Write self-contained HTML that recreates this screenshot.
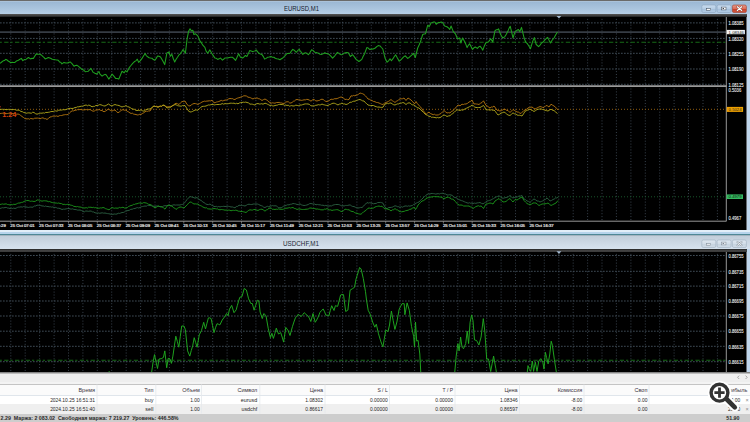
<!DOCTYPE html>
<html><head><meta charset="utf-8"><style>
html,body{margin:0;padding:0;width:750px;height:422px;overflow:hidden;background:#d0dbe6;font-family:"Liberation Sans",sans-serif}
.a{position:absolute;box-sizing:border-box}
svg{display:block}
</style></head><body>
<div class="a" style="left:0;top:0;width:750px;height:1px;background:#6a6a6a"></div>
<div class="a" style="left:0;top:1px;width:750px;height:13.4px;background:linear-gradient(#b4c9de 0px,#9cb8d4 1.2px,#b4cde5 12.4px,#c2d6ea 13.4px)"></div>
<div class="a" style="left:284px;top:5px;font-size:7px;line-height:7px;color:#15202c;white-space:nowrap;transform:scaleX(0.85);transform-origin:0 0">EURUSD,M1</div>
<svg class="a" style="left:700px;top:4px" width="50" height="10" viewBox="700 4 50 10"><defs><linearGradient id="bga" x1="0" y1="0" x2="0" y2="1"><stop offset="0" stop-color="#c9dcef"/><stop offset="0.5" stop-color="#b6cde4"/><stop offset="0.52" stop-color="#a4bfda"/><stop offset="1" stop-color="#b4cce4"/></linearGradient><linearGradient id="cga" x1="0" y1="0" x2="0" y2="1"><stop offset="0" stop-color="#ec9a88"/><stop offset="0.5" stop-color="#dc6a55"/><stop offset="0.52" stop-color="#c8402a"/><stop offset="1" stop-color="#d45a40"/></linearGradient></defs><rect x="701.8" y="5" width="14" height="7.5" rx="1.5" fill="url(#bga)" stroke="#8aa3be" stroke-width="0.6"/><rect x="717.1" y="5" width="14" height="7.5" rx="1.5" fill="url(#bga)" stroke="#8aa3be" stroke-width="0.6"/><rect x="732.4" y="5" width="14" height="7.5" rx="1.5" fill="url(#cga)" stroke="#9a4030" stroke-width="0.6"/><rect x="706.3" y="8.7" width="4.4" height="1.5" fill="#fff" stroke="#3a4450" stroke-width="0.5"/><rect x="721.6" y="7.1" width="4.4" height="2.8" fill="#fff" stroke="#3a4450" stroke-width="0.5"/><rect x="722.6" y="8.0" width="1.4" height="1.0" fill="#3a4450"/><path d="M737.3 6.7 L741.7 10.5 M741.7 6.7 L737.3 10.5" stroke="#6a2a20" stroke-width="1.9" stroke-linecap="round"/><path d="M737.3 6.7 L741.7 10.5 M741.7 6.7 L737.3 10.5" stroke="#fff" stroke-width="1.2" stroke-linecap="round"/></svg>
<svg width="750" height="215" viewBox="0 16 750 215" style="position:absolute;left:0;top:16px;font-family:'Liberation Sans',sans-serif">
<rect x="0" y="16" width="746.5" height="214.4" fill="#000"/>
<g stroke="#3e4a56" stroke-width="0.9" stroke-dasharray="1 1.9"><line x1="10.8" y1="16" x2="10.8" y2="221"/><line x1="25.2" y1="16" x2="25.2" y2="221"/><line x1="39.6" y1="16" x2="39.6" y2="221"/><line x1="54.1" y1="16" x2="54.1" y2="221"/><line x1="68.5" y1="16" x2="68.5" y2="221"/><line x1="82.9" y1="16" x2="82.9" y2="221"/><line x1="97.3" y1="16" x2="97.3" y2="221"/><line x1="111.7" y1="16" x2="111.7" y2="221"/><line x1="126.2" y1="16" x2="126.2" y2="221"/><line x1="140.6" y1="16" x2="140.6" y2="221"/><line x1="155.0" y1="16" x2="155.0" y2="221"/><line x1="169.4" y1="16" x2="169.4" y2="221"/><line x1="183.8" y1="16" x2="183.8" y2="221"/><line x1="198.3" y1="16" x2="198.3" y2="221"/><line x1="212.7" y1="16" x2="212.7" y2="221"/><line x1="227.1" y1="16" x2="227.1" y2="221"/><line x1="241.5" y1="16" x2="241.5" y2="221"/><line x1="255.9" y1="16" x2="255.9" y2="221"/><line x1="270.4" y1="16" x2="270.4" y2="221"/><line x1="284.8" y1="16" x2="284.8" y2="221"/><line x1="299.2" y1="16" x2="299.2" y2="221"/><line x1="313.6" y1="16" x2="313.6" y2="221"/><line x1="328.0" y1="16" x2="328.0" y2="221"/><line x1="342.5" y1="16" x2="342.5" y2="221"/><line x1="356.9" y1="16" x2="356.9" y2="221"/><line x1="371.3" y1="16" x2="371.3" y2="221"/><line x1="385.7" y1="16" x2="385.7" y2="221"/><line x1="400.1" y1="16" x2="400.1" y2="221"/><line x1="414.6" y1="16" x2="414.6" y2="221"/><line x1="429.0" y1="16" x2="429.0" y2="221"/><line x1="443.4" y1="16" x2="443.4" y2="221"/><line x1="457.8" y1="16" x2="457.8" y2="221"/><line x1="472.2" y1="16" x2="472.2" y2="221"/><line x1="486.7" y1="16" x2="486.7" y2="221"/><line x1="501.1" y1="16" x2="501.1" y2="221"/><line x1="515.5" y1="16" x2="515.5" y2="221"/><line x1="529.9" y1="16" x2="529.9" y2="221"/><line x1="544.3" y1="16" x2="544.3" y2="221"/><line x1="558.8" y1="16" x2="558.8" y2="221"/><line x1="573.2" y1="16" x2="573.2" y2="221"/><line x1="587.6" y1="16" x2="587.6" y2="221"/><line x1="602.0" y1="16" x2="602.0" y2="221"/><line x1="616.4" y1="16" x2="616.4" y2="221"/><line x1="630.9" y1="16" x2="630.9" y2="221"/><line x1="645.3" y1="16" x2="645.3" y2="221"/><line x1="659.7" y1="16" x2="659.7" y2="221"/><line x1="674.1" y1="16" x2="674.1" y2="221"/><line x1="688.5" y1="16" x2="688.5" y2="221"/><line x1="703.0" y1="16" x2="703.0" y2="221"/><line x1="717.4" y1="16" x2="717.4" y2="221"/></g>
<g stroke="#45525e" stroke-width="0.9" stroke-dasharray="1.7 1.3"><line x1="0" y1="22.9" x2="726" y2="22.9"/><line x1="0" y1="38.4" x2="726" y2="38.4"/><line x1="0" y1="53.3" x2="726" y2="53.3"/><line x1="0" y1="69.0" x2="726" y2="69.0"/><line x1="0" y1="84.3" x2="726" y2="84.3"/></g>
<line x1="0" y1="32.15" x2="726" y2="32.15" stroke="#363c44" stroke-width="1.7"/>
<line x1="0" y1="42.2" x2="726" y2="42.2" stroke="#176a17" stroke-width="1.1" stroke-dasharray="4.3 1.9 2.2 2.4" stroke-dashoffset="6.6"/>
<line x1="0" y1="86.2" x2="726.5" y2="86.2" stroke="#9a9a9a" stroke-width="1.8"/>
<line x1="0" y1="109.3" x2="726" y2="109.3" stroke="#a06810" stroke-width="0.9" stroke-dasharray="1 2"/>
<line x1="0" y1="196.8" x2="726" y2="196.8" stroke="#1a6030" stroke-width="0.9" stroke-dasharray="1 2"/>
<rect x="0" y="106.3" width="1" height="1" fill="#a03020"/>
<polyline fill="none" stroke="#1fa01f" stroke-width="1.05" stroke-opacity="1" stroke-linejoin="round" points="0.0,63.4 1.43,62.24 2.85,61.09 4.28,60.54 5.7,59.4 6.95,59.84 8.2,61.08 9.45,61.75 10.7,62.7 12.1,62.2 13.5,62.51 14.9,62.4 16.35,61.08 17.8,60.6 19.55,59.44 21.3,58.4 22.8,60.6 24.55,59.51 26.3,59.2 28.4,57.5 30.6,58.9 32.0,58.28 33.4,58.4 34.85,56.08 36.3,53.9 38.05,54.34 39.8,54.2 41.25,54.91 42.7,56.3 43.95,57.35 45.2,58.9 46.8,58.31 48.4,57.5 50.5,58.2 52.25,59.2 54.0,59.4 55.43,59.77 56.87,59.91 58.3,60.3 59.5,61.93 60.7,62.29 61.9,63.9 64.0,62.4 65.8,63.02 67.6,63.0 69.0,62.31 70.4,62.0 72.2,63.83 74.0,66.3 75.4,65.46 76.8,65.3 78.25,66.13 79.7,67.3 81.1,68.68 82.5,69.5 83.9,70.31 85.3,71.7 86.75,71.57 88.2,71.3 89.5,69.98 90.8,68.4 92.0,70.29 93.2,72.4 94.95,73.29 96.7,74.1 98.9,71.5 100.0,74.1 102.1,76.2 103.3,75.21 104.5,74.6 105.7,74.4 107.25,76.49 108.8,79.1 110.45,76.76 112.1,74.1 113.85,76.18 115.6,78.4 117.2,78.58 118.8,79.1 120.4,75.28 122.0,71.3 124.2,72.7 125.6,70.5 127.0,72.0 129.2,67.7 130.95,65.51 132.7,63.4 134.23,61.82 135.77,60.86 137.3,59.2 138.7,62.4 140.35,60.58 142.0,58.4 143.6,55.72 145.2,53.5 146.2,55.6 147.65,56.72 149.1,57.7 150.5,57.97 151.9,58.2 153.35,59.59 154.8,60.3 156.2,58.36 157.6,56.0 159.05,56.31 160.5,57.0 162.6,60.6 164.7,64.6 166.9,53.0 169.0,52.0 170.4,56.3 171.8,54.2 173.25,58.53 174.7,62.0 176.1,59.29 177.5,57.19 178.9,54.9 180.0,54.1 181.55,51.98 183.1,49.4 185.4,53.3 187.1,38.8 188.5,31.6 190.0,28.8 191.4,30.9 192.8,30.2 193.9,34.5 195.6,33.8 197.8,35.9 199.9,40.9 201.35,42.74 202.8,45.2 204.9,47.3 206.0,50.9 207.7,53.3 209.9,49.9 212.0,53.7 213.45,55.84 214.9,58.0 216.3,58.29 217.7,59.4 219.1,58.85 220.5,58.0 222.4,60.1 223.6,59.29 224.8,58.0 226.23,57.9 227.67,58.0 229.1,57.5 230.85,57.23 232.6,57.3 234.0,58.7 235.5,60.4 237.05,57.23 238.6,53.7 240.5,57.3 242.6,58.0 244.0,56.83 245.4,55.5 246.9,56.5 248.3,53.62 249.7,50.6 251.1,51.06 252.5,51.6 253.7,51.34 254.9,50.87 256.1,49.9 257.5,51.58 258.9,53.3 260.35,54.0 261.8,54.4 263.2,56.35 264.6,59.1 266.05,58.38 267.5,57.3 269.25,57.03 271.0,56.5 272.45,57.34 273.9,57.3 275.3,58.29 276.7,58.7 278.35,59.06 280.0,59.8 281.4,58.8 282.8,58.0 284.6,56.2 286.4,54.1 287.6,53.4 288.8,53.53 290.0,53.3 291.4,51.05 292.8,49.4 294.6,50.51 296.4,52.3 297.8,50.45 299.2,49.4 300.4,51.31 301.6,52.4 302.8,54.4 304.2,53.32 305.6,52.7 307.0,53.6 308.4,54.7 310.0,52.53 311.6,49.7 313.25,50.62 314.9,52.3 316.3,52.6 317.7,53.0 318.9,53.51 320.1,54.28 321.3,54.4 323.05,53.84 324.8,52.7 326.23,53.59 327.67,53.63 329.1,54.4 330.85,56.22 332.6,58.2 334.8,55.8 336.2,53.92 337.6,52.3 339.4,53.85 341.2,54.7 342.6,54.41 344.0,53.3 345.43,52.79 346.87,52.61 348.3,52.7 350.4,56.5 352.5,54.7 353.7,56.03 354.9,57.59 356.1,59.4 357.5,60.44 358.9,61.5 360.35,60.53 361.8,59.4 363.2,56.34 364.6,53.7 366.8,47.6 368.2,48.05 369.6,49.4 371.4,49.13 373.2,49.0 375.3,48.0 376.75,46.68 378.2,45.6 380.0,45.9 381.4,47.51 382.8,49.0 385.0,58.0 387.1,62.2 388.55,60.86 390.0,58.7 391.4,60.8 392.8,58.94 394.2,56.75 395.6,54.7 397.4,58.06 399.2,61.2 400.6,60.11 402.0,58.7 403.65,56.85 405.3,55.8 407.7,58.4 409.12,57.48 410.55,56.1 411.97,54.91 413.4,53.3 415.3,57.5 417.7,48.0 419.1,45.07 420.5,41.6 422.7,34.5 424.1,34.05 425.5,33.8 427.7,25.2 429.1,26.7 431.2,22.8 432.4,22.44 433.6,21.91 434.8,22.0 436.2,24.3 438.3,22.4 439.73,22.52 441.17,22.01 442.6,22.4 444.7,26.0 446.9,26.7 448.3,27.71 449.7,29.5 451.1,26.0 453.3,31.6 455.4,33.8 457.5,38.8 459.7,38.0 460.8,43.0 462.5,38.0 464.6,41.6 465.85,44.34 467.1,47.6 468.35,45.35 469.6,43.7 471.05,46.41 472.5,49.4 473.9,47.8 475.3,47.0 477.4,48.4 478.7,46.85 480.0,46.2 481.4,47.84 482.8,50.1 484.25,46.19 485.7,43.0 487.1,42.33 488.5,41.9 490.7,38.8 492.8,41.9 494.9,30.9 496.1,29.77 497.3,29.84 498.5,28.8 500.6,34.5 502.8,38.0 504.9,36.6 506.3,34.2 507.7,31.6 508.95,28.58 510.2,26.2 511.6,31.88 513.0,38.0 514.9,31.9 516.65,30.56 518.4,29.5 519.8,31.6 521.5,27.4 522.8,32.58 524.1,38.0 525.8,42.3 527.1,43.41 528.4,45.2 530.5,48.7 532.6,41.6 534.3,37.6 536.2,44.5 538.6,46.6 540.05,45.11 541.5,43.0 543.1,42.04 544.7,40.2 546.15,38.72 547.6,37.3 549.0,40.14 550.4,43.0 551.6,40.96 552.8,39.31 554.0,38.0 555.75,34.81 557.5,31.9"/>
<polyline fill="none" stroke="#b87810" stroke-width="0.9" stroke-opacity="1" stroke-linejoin="round" points="0.0,113.5 1.2,113.37 2.4,113.25 3.6,113.74 4.8,113.25 6.0,113.7 7.2,113.58 8.4,113.34 9.6,113.77 10.8,113.38 12.0,113.77 13.2,113.48 14.4,113.53 15.6,113.87 16.8,114.26 18.0,114.0 19.33,114.49 20.67,115.42 22.0,116.5 23.33,117.38 24.67,118.44 26.0,118.8 27.2,118.87 28.4,118.71 29.6,119.23 30.8,118.39 32.0,118.8 33.33,118.92 34.67,118.21 36.0,118.2 37.33,118.08 38.67,118.26 40.0,118.8 41.5,118.13 43.0,117.8 44.33,118.65 45.67,118.65 47.0,119.5 48.5,118.32 50.0,117.0 51.33,116.79 52.67,116.22 54.0,116.0 55.33,116.21 56.67,115.94 58.0,116.5 59.25,115.73 60.5,115.49 61.75,115.54 63.0,115.0 64.25,114.81 65.5,114.58 66.75,114.7 68.0,114.5 69.5,112.96 71.0,111.5 72.33,110.89 73.67,110.9 75.0,110.2 76.25,110.2 77.5,109.62 78.75,109.74 80.0,109.5 81.25,109.6 82.5,109.99 83.75,109.93 85.0,109.8 86.33,109.51 87.67,110.03 89.0,109.5 90.33,109.72 91.67,110.56 93.0,111.2 94.25,111.08 95.5,110.19 96.75,110.14 98.0,109.8 99.33,109.62 100.67,110.42 102.0,110.5 104.0,111.8 105.5,111.1 107.0,110.0 108.5,109.0 110.25,110.34 112.0,111.0 113.5,110.33 115.0,110.0 116.5,111.58 118.0,112.8 119.33,111.88 120.67,110.87 122.0,109.8 123.33,109.83 124.67,110.24 126.0,110.0 127.33,111.4 128.67,111.98 130.0,113.0 131.2,113.45 132.4,113.2 133.6,114.08 134.8,114.33 136.0,114.5 137.25,114.94 138.5,114.79 139.75,114.31 141.0,114.5 142.33,113.5 143.67,112.85 145.0,111.8 146.25,111.17 147.5,111.37 148.75,110.9 150.0,111.0 151.33,108.99 152.67,107.27 154.0,106.0 155.33,106.51 156.67,106.2 158.0,106.8 159.2,106.31 160.4,106.18 161.6,106.35 162.8,105.38 164.0,105.5 165.5,106.2 167.0,107.0 168.2,106.74 169.4,106.75 170.6,106.39 171.8,106.13 173.0,105.5 174.5,104.15 176.0,103.2 177.5,103.77 179.0,104.5 180.5,102.87 182.0,101.5 183.5,101.6 185.0,101.0 187.0,104.5 188.5,105.66 190.0,106.0 191.33,104.85 192.67,104.04 194.0,103.5 195.33,103.59 196.67,103.93 198.0,104.5 199.33,103.65 200.67,102.91 202.0,102.0 203.2,101.59 204.4,101.15 205.6,101.33 206.8,101.08 208.0,101.0 209.33,100.79 210.67,100.87 212.0,100.2 214.0,102.8 215.2,102.61 216.4,102.09 217.6,101.83 218.8,101.52 220.0,101.0 221.25,100.37 222.5,100.91 223.75,100.58 225.0,100.1 226.25,100.04 227.5,99.57 228.75,98.8 230.0,98.5 231.25,98.66 232.5,98.64 233.75,99.37 235.0,99.5 236.25,98.61 237.5,98.11 238.75,97.74 240.0,97.5 241.25,96.77 242.5,96.51 243.75,95.82 245.0,95.8 246.5,96.05 248.0,97.2 249.25,97.34 250.5,97.74 251.75,98.43 253.0,99.0 254.33,98.17 255.67,98.54 257.0,97.8 258.25,98.58 259.5,98.83 260.75,99.6 262.0,100.5 263.5,99.61 265.0,99.0 266.25,99.75 267.5,100.41 268.75,101.94 270.0,102.5 271.25,103.12 272.5,102.82 273.75,103.01 275.0,103.2 276.5,102.48 278.0,102.5 279.25,102.39 280.5,102.86 281.75,103.04 283.0,103.5 284.33,103.23 285.67,102.06 287.0,101.8 288.33,101.77 289.67,103.01 291.0,103.0 292.2,102.33 293.4,101.28 294.6,100.94 295.8,99.77 297.0,99.5 298.5,99.78 300.0,100.0 301.33,100.36 302.67,100.19 304.0,99.8 305.33,99.88 306.67,99.39 308.0,99.5 309.5,100.23 311.0,101.2 313.0,99.5 314.33,99.7 315.67,100.74 317.0,101.0 318.25,100.58 319.5,100.35 320.75,99.5 322.0,99.2 323.25,99.53 324.5,100.63 325.75,101.36 327.0,101.5 328.33,101.05 329.67,100.24 331.0,99.2 332.25,99.39 333.5,99.22 334.75,98.65 336.0,98.8 337.2,98.5 338.4,98.03 339.6,97.42 340.8,97.1 342.0,97.2 343.5,98.15 345.0,99.5 346.33,99.28 347.67,99.67 349.0,99.5 351.0,95.8 352.25,96.06 353.5,95.45 354.75,95.74 356.0,95.2 357.33,94.91 358.67,94.14 360.0,93.0 361.33,93.38 362.67,93.75 364.0,94.5 365.33,95.75 366.67,97.23 368.0,99.0 369.33,99.23 370.67,100.11 372.0,100.5 373.5,101.46 375.0,101.7 376.33,102.44 377.67,102.55 379.0,103.0 380.33,103.64 381.67,104.27 383.0,104.5 384.5,103.13 386.0,102.5 387.25,101.89 388.5,101.37 389.75,100.5 391.0,99.5 392.33,100.73 393.67,101.48 395.0,102.5 396.25,101.29 397.5,100.91 398.75,99.57 400.0,98.8 401.33,98.8 402.67,98.69 404.0,98.0 406.0,100.5 408.0,98.0 409.5,98.91 411.0,100.0 412.75,101.81 414.5,103.8 416.0,101.5 417.33,103.57 418.67,105.04 420.0,106.5 421.5,108.2 423.0,110.5 424.5,112.16 426.0,114.5 427.5,113.04 429.0,112.2 430.5,113.56 432.0,114.2 433.25,114.68 434.5,114.28 435.75,115.09 437.0,115.0 438.33,114.93 439.67,114.14 441.0,113.5 442.5,111.87 444.0,110.5 445.5,111.79 447.0,113.0 448.5,112.67 450.0,113.0 451.33,111.4 452.67,111.09 454.0,109.5 455.33,108.13 456.67,106.52 458.0,105.0 460.0,105.8 462.0,104.2 463.33,104.52 464.67,104.01 466.0,104.0 467.5,103.33 469.0,102.0 470.5,101.39 472.0,100.2 474.0,104.0 475.25,103.86 476.5,104.03 477.75,104.19 479.0,104.5 480.5,103.27 482.0,102.5 483.5,100.8 484.75,103.23 486.0,105.5 487.33,106.12 488.67,107.09 490.0,108.0 491.33,107.0 492.67,107.04 494.0,106.0 495.5,107.97 497.0,110.2 498.5,110.56 500.0,111.0 501.33,110.41 502.67,110.03 504.0,109.0 505.33,109.43 506.67,110.38 508.0,110.5 510.0,112.5 511.5,111.0 513.0,109.5 514.33,110.36 515.67,111.19 517.0,112.0 518.33,112.07 519.67,112.95 521.0,113.5 522.33,112.05 523.67,110.72 525.0,110.0 526.5,109.27 528.0,108.0 529.33,107.37 530.67,107.31 532.0,107.0 533.5,108.2 535.0,109.0 536.25,108.43 537.5,107.59 538.75,107.14 540.0,106.5 541.33,106.88 542.67,107.42 544.0,107.5 546.0,105.5 547.5,105.9 549.0,107.0 551.0,104.2 552.5,105.15 554.0,106.0 555.5,107.17 557.0,108.8 558,110"/>
<polyline fill="none" stroke="#b4ac1c" stroke-width="0.9" stroke-opacity="1" stroke-linejoin="round" points="0.0,109.5 1.2,109.37 2.4,109.25 3.6,109.74 4.8,109.25 6.0,109.7 7.2,109.58 8.4,109.34 9.6,109.77 10.8,109.38 12.0,109.77 13.2,109.48 14.4,109.53 15.6,109.87 16.8,110.26 18.0,110.0 19.5,110.41 21.0,111.5 22.33,111.68 23.67,112.48 25.0,112.8 26.25,113.25 27.5,112.97 28.75,112.86 30.0,113.0 31.33,113.26 32.67,112.26 34.0,112.5 35.5,113.67 37.0,114.2 38.25,113.76 39.5,113.38 40.75,113.11 42.0,113.2 43.25,112.85 44.5,113.13 45.75,112.39 47.0,112.5 48.25,112.32 49.5,112.13 50.75,111.64 52.0,111.5 53.25,111.47 54.5,110.96 55.75,110.88 57.0,111.2 58.5,110.34 60.0,110.0 61.25,110.11 62.5,109.83 63.75,109.68 65.0,109.8 66.33,109.44 67.67,108.89 69.0,108.5 70.5,108.32 72.0,108.5 73.5,108.26 75.0,107.5 76.25,107.43 77.5,106.77 78.75,106.82 80.0,106.5 81.25,106.2 82.5,106.19 83.75,105.73 85.0,105.2 86.25,105.08 87.5,105.78 88.75,105.08 90.0,105.5 92.0,106.8 93.25,106.4 94.5,106.38 95.75,105.51 97.0,105.5 98.33,105.26 99.67,104.62 101.0,104.8 102.33,105.35 103.67,105.84 105.0,106.0 106.75,105.07 108.5,104.0 110.25,105.34 112.0,106.0 113.5,105.08 115.0,104.5 116.33,105.01 117.67,105.25 119.0,105.5 120.5,106.32 122.0,107.0 123.33,106.46 124.67,106.31 126.0,105.5 127.5,106.65 129.0,107.0 130.33,107.71 131.67,108.61 133.0,109.2 134.33,109.24 135.67,110.25 137.0,110.5 138.33,110.4 139.67,110.48 141.0,109.8 142.5,110.79 144.0,111.2 145.5,110.01 147.0,109.2 148.5,109.0 150.0,109.0 151.33,108.15 152.67,106.57 154.0,106.0 155.33,106.47 156.67,106.7 158.0,107.5 159.2,106.66 160.4,106.1 161.6,106.24 162.8,105.17 164.0,105.0 165.5,106.27 167.0,108.0 168.33,107.57 169.67,107.67 171.0,107.0 172.33,105.79 173.67,105.29 175.0,104.5 176.25,104.92 177.5,105.6 178.75,105.91 180.0,106.0 181.25,106.2 182.5,105.55 183.75,105.55 185.0,105.5 186.5,107.87 188.0,110.5 190.0,112.0 191.33,111.85 192.67,111.41 194.0,110.5 195.33,110.09 196.67,110.01 198.0,110.2 199.33,108.73 200.67,107.49 202.0,106.5 203.33,106.32 204.67,106.25 206.0,106.0 207.2,105.49 208.4,104.95 209.6,105.03 210.8,104.68 212.0,104.5 213.2,104.56 214.4,104.91 215.6,104.67 216.8,104.51 218.0,104.5 219.4,104.43 220.8,104.3 222.2,103.56 223.6,104.14 225.0,103.6 226.25,103.75 227.5,103.74 228.75,103.57 230.0,103.2 231.33,103.2 232.67,103.31 234.0,103.14 235.33,103.72 236.67,103.31 238.0,103.8 239.33,102.98 240.67,102.67 242.0,102.5 243.25,102.2 244.5,102.36 245.75,102.1 247.0,102.5 248.5,102.9 250.0,104.2 251.25,104.09 252.5,104.24 253.75,104.68 255.0,105.0 256.5,103.82 258.0,103.5 259.25,104.01 260.5,103.95 261.75,103.71 263.0,104.2 265.0,103.2 266.25,103.55 267.5,104.21 268.75,104.8 270.0,105.5 271.25,105.16 272.5,105.81 273.75,105.94 275.0,105.5 276.2,105.27 277.4,105.09 278.6,104.53 279.8,104.34 281.0,104.5 282.2,104.56 283.4,104.69 284.6,105.4 285.8,105.0 287.0,105.5 288.2,105.17 289.4,106.11 290.6,105.83 291.8,105.58 293.0,106.0 294.4,105.84 295.8,105.17 297.2,105.43 298.6,105.63 300.0,105.0 301.33,105.06 302.67,104.64 304.0,104.2 305.33,103.92 306.67,103.95 308.0,104.0 309.33,104.37 310.67,105.58 312.0,106.0 313.25,105.83 314.5,105.85 315.75,105.25 317.0,105.2 318.25,104.65 319.5,104.88 320.75,104.74 322.0,104.0 323.2,104.62 324.4,104.88 325.6,105.19 326.8,105.42 328.0,105.5 329.25,104.68 330.5,104.37 331.75,103.65 333.0,103.2 334.25,103.23 335.5,103.68 336.75,104.35 338.0,105.0 339.33,104.12 340.67,103.84 342.0,103.0 343.33,103.91 344.67,103.95 346.0,104.5 347.33,104.13 348.67,103.41 350.0,102.2 351.25,102.36 352.5,101.58 353.75,101.2 355.0,101.2 356.25,100.53 357.5,100.08 358.75,99.66 360.0,99.5 361.33,100.11 362.67,100.86 364.0,101.0 365.33,102.64 366.67,103.65 368.0,105.0 369.33,105.3 370.67,105.6 372.0,105.5 373.5,105.53 375.0,106.3 376.33,106.68 377.67,107.14 379.0,107.0 380.33,107.32 381.67,107.36 383.0,107.2 385.0,104.0 386.2,103.78 387.4,103.31 388.6,103.66 389.8,103.05 391.0,103.0 392.33,103.94 393.67,104.76 395.0,105.0 396.25,104.41 397.5,103.91 398.75,103.9 400.0,103.0 401.33,103.14 402.67,102.57 404.0,102.8 406.0,104.5 407.5,103.31 409.0,102.8 410.2,103.09 411.4,104.36 412.6,104.88 413.8,104.88 415.0,105.8 416.33,106.83 417.67,107.7 419.0,108.0 420.5,109.64 422.0,111.0 423.5,112.37 425.0,114.0 426.33,114.88 427.67,115.33 429.0,116.5 430.2,116.26 431.4,117.32 432.6,117.23 433.8,117.32 435.0,117.5 436.25,117.89 437.5,117.44 438.75,117.83 440.0,117.5 441.33,116.96 442.67,115.57 444.0,115.0 445.5,115.53 447.0,116.5 448.5,115.91 450.0,115.7 451.33,114.4 452.67,113.64 454.0,112.5 455.5,110.93 457.0,109.8 458.5,110.08 460.0,110.5 461.33,109.83 462.67,110.2 464.0,109.5 465.33,108.7 466.67,108.13 468.0,107.5 469.33,106.74 470.67,106.2 472.0,105.0 473.33,105.76 474.67,107.04 476.0,107.5 477.33,107.5 478.67,107.53 480.0,107.5 481.75,106.52 483.5,105.5 484.75,107.22 486.0,109.8 487.33,109.88 488.67,109.78 490.0,110.2 491.33,109.69 492.67,110.34 494.0,110.0 495.33,111.37 496.67,113.31 498.0,115.0 499.5,114.3 501.0,113.2 502.5,112.65 504.0,112.0 505.33,112.84 506.67,114.02 508.0,115.0 510.0,115.5 511.5,114.2 513.0,112.8 514.33,113.79 515.67,113.91 517.0,115.0 518.25,115.3 519.5,115.27 520.75,115.55 522.0,116.0 523.5,113.9 525.0,111.3 526.25,110.73 527.5,110.21 528.75,109.81 530.0,109.0 531.33,110.2 532.67,110.62 534.0,111.5 535.5,110.6 537.0,109.5 538.33,109.27 539.67,109.04 541.0,108.8 542.33,109.44 543.67,109.69 545.0,110.2 546.5,110.63 548.0,111.0 549.5,110.08 551.0,109.2 552.5,110.25 554.0,110.5 555.75,112.18 557.5,113.5"/>
<polyline fill="none" stroke="#2a5e40" stroke-width="0.95" stroke-opacity="1" stroke-linejoin="round" points="0.0,208.5 1.25,208.09 2.5,207.69 3.75,207.89 5.0,207.5 6.25,207.37 7.5,208.03 8.75,208.13 10.0,208.5 11.25,208.1 12.5,208.51 13.75,208.08 15.0,208.5 16.2,208.1 17.4,207.43 18.6,207.11 19.8,207.07 21.0,206.8 22.25,207.14 23.5,206.56 24.75,206.7 26.0,207.0 27.2,207.15 28.4,207.48 29.6,207.19 30.8,207.07 32.0,207.2 33.25,207.13 34.5,205.79 35.75,206.02 37.0,205.2 38.25,205.21 39.5,205.28 40.75,205.46 42.0,206.0 43.2,205.93 44.4,206.48 45.6,206.01 46.8,206.47 48.0,206.5 49.2,206.83 50.4,206.79 51.6,207.14 52.8,206.91 54.0,207.5 55.2,207.3 56.4,207.64 57.6,208.26 58.8,208.23 60.0,208.5 62.0,209.5 63.4,209.13 64.8,209.18 66.2,208.86 67.6,208.52 69.0,208.5 70.2,208.96 71.4,209.08 72.6,208.87 73.8,209.37 75.0,209.5 76.25,209.65 77.5,210.09 78.75,210.08 80.0,210.0 81.5,210.56 83.0,211.5 84.4,211.83 85.8,210.96 87.2,211.13 88.6,211.33 90.0,211.0 91.25,211.14 92.5,211.89 93.75,211.94 95.0,212.8 96.2,212.99 97.4,213.12 98.6,212.99 99.8,213.3 101.0,213.0 102.33,212.83 103.67,213.18 105.0,213.0 106.25,213.33 107.5,213.57 108.75,213.71 110.0,214.0 111.4,214.31 112.8,214.4 114.2,213.98 115.6,214.15 117.0,214.0 118.25,213.23 119.5,213.43 120.75,213.01 122.0,212.5 123.2,212.54 124.4,211.99 125.6,211.11 126.8,210.8 128.0,210.5 129.4,210.25 130.8,209.27 132.2,209.27 133.6,208.6 135.0,208.5 136.25,207.91 137.5,207.6 138.75,207.99 140.0,207.5 141.25,206.79 142.5,206.52 143.75,206.28 145.0,206.0 146.25,206.21 147.5,205.37 148.75,205.58 150.0,205.5 151.25,205.68 152.5,206.12 153.75,206.2 155.0,206.38 156.25,205.99 157.5,206.25 158.75,206.34 160.0,206.6 161.25,206.81 162.5,206.74 163.75,205.87 165.0,205.76 166.25,205.67 167.5,205.54 168.75,205.62 170.0,205.5 171.33,205.5 172.67,205.12 174.0,204.8 175.33,205.09 176.67,204.97 178.0,205.0 180.0,205.0 181.33,204.56 182.67,204.41 184.0,203.5 185.5,201.67 187.0,199.5 188.5,198.01 190.0,196.5 191.5,196.96 193.0,197.2 195.0,198.2 197.0,197.5 198.5,198.91 200.0,200.0 201.33,200.43 202.67,202.03 204.0,202.5 205.5,203.75 207.0,204.5 208.5,204.59 210.0,204.0 211.33,205.1 212.67,205.57 214.0,206.5 215.2,206.51 216.4,206.34 217.6,206.92 218.8,206.51 220.0,207.0 221.25,206.49 222.5,206.49 223.75,206.32 225.0,206.5 226.2,206.46 227.4,206.3 228.6,206.35 229.8,206.59 231.0,207.0 232.33,206.91 233.67,207.41 235.0,207.8 236.33,206.51 237.67,206.4 239.0,205.2 240.2,205.46 241.4,205.2 242.6,205.46 243.8,205.7 245.0,206.0 246.33,205.28 247.67,204.46 249.0,204.2 250.4,204.47 251.8,204.56 253.2,204.05 254.6,204.03 256.0,204.0 257.33,204.03 258.67,204.44 260.0,205.2 261.25,205.63 262.5,206.14 263.75,207.22 265.0,207.5 266.25,206.82 267.5,206.32 268.75,206.78 270.0,206.0 271.25,205.98 272.5,205.58 273.75,205.89 275.0,205.8 276.25,205.87 277.5,206.83 278.75,207.73 280.0,207.8 281.25,207.63 282.5,206.98 283.75,206.09 285.0,205.8 286.33,205.3 287.67,204.73 289.0,204.89 290.33,204.3 291.67,204.13 293.0,203.5 294.33,203.68 295.67,203.92 297.0,204.5 298.5,204.43 300.0,203.8 301.33,204.8 302.67,205.25 304.0,205.5 305.4,205.38 306.8,204.99 308.2,204.52 309.6,203.65 311.0,203.5 312.25,203.84 313.5,204.02 314.75,204.05 316.0,204.8 317.4,204.46 318.8,204.76 320.2,204.82 321.6,205.29 323.0,205.2 324.4,205.73 325.8,205.39 327.2,205.95 328.6,206.12 330.0,205.8 331.4,205.95 332.8,205.16 334.2,204.77 335.6,204.51 337.0,204.5 338.2,204.49 339.4,204.75 340.6,205.39 341.8,205.9 343.0,205.8 344.2,205.95 345.4,205.46 346.6,205.46 347.8,205.43 349.0,205.0 350.25,205.0 351.5,205.89 352.75,206.49 354.0,206.5 355.33,207.25 356.67,207.73 358.0,208.0 359.33,207.81 360.67,207.38 362.0,207.5 363.25,206.51 364.5,204.85 365.75,204.02 367.0,202.5 368.25,203.1 369.5,202.76 370.75,202.94 372.0,203.2 373.5,203.75 375.0,203.5 376.33,203.37 377.67,202.54 379.0,202.5 380.33,202.4 381.67,202.65 383.0,203.2 384.5,206.21 386.0,208.5 387.33,208.44 388.67,207.51 390.0,207.5 391.25,207.37 392.5,207.08 393.75,206.37 395.0,205.8 396.25,206.09 397.5,206.69 398.75,206.74 400.0,207.5 401.25,206.69 402.5,207.17 403.75,206.51 405.0,206.0 406.2,205.98 407.4,206.31 408.6,205.82 409.8,206.17 411.0,205.8 412.33,205.49 413.67,204.34 415.0,204.0 416.33,203.11 417.67,202.48 419.0,202.0 420.33,200.43 421.67,199.41 423.0,198.0 424.33,196.62 425.67,195.59 427.0,194.5 428.33,193.83 429.67,194.2 431.0,193.5 432.2,193.43 433.4,193.58 434.6,193.76 435.8,194.1 437.0,193.8 438.2,193.61 439.4,193.94 440.6,193.44 441.8,193.35 443.0,193.2 444.33,193.82 445.67,193.97 447.0,195.0 448.33,194.95 449.67,194.71 451.0,195.0 452.33,195.39 453.67,196.94 455.0,197.5 456.25,197.83 457.5,198.73 458.75,199.58 460.0,200.0 461.4,200.61 462.8,200.96 464.2,201.7 465.6,202.29 467.0,202.8 468.2,203.2 469.4,202.73 470.6,203.27 471.8,203.13 473.0,203.5 474.4,203.1 475.8,203.35 477.2,202.91 478.6,202.76 480.0,202.5 481.5,203.38 483.0,203.8 484.33,203.24 485.67,201.88 487.0,201.0 488.33,200.77 489.67,200.34 491.0,200.0 492.33,199.18 493.67,198.51 495.0,197.5 496.33,196.89 497.67,196.4 499.0,195.8 500.5,196.88 502.0,198.0 503.33,198.23 504.67,197.85 506.0,197.5 507.33,197.17 508.67,196.56 510.0,195.5 511.25,196.53 512.5,198.0 514.25,197.55 516.0,197.0 517.5,196.9 519.0,196.0 520.5,196.06 522.0,195.5 524.0,199.0 525.5,199.67 527.0,201.0 528.5,201.41 530.0,202.5 531.33,201.28 532.67,199.78 534.0,199.0 535.5,199.77 537.0,201.0 538.5,201.12 540.0,202.0 541.33,201.49 542.67,200.92 544.0,200.0 545.5,199.36 547.0,198.0 548.5,199.19 550.0,201.0 551.5,200.44 553.0,199.5 554.25,199.02 555.5,197.93 556.75,197.97 558,197"/>
<polyline fill="none" stroke="#1c9a1c" stroke-width="0.9" stroke-opacity="1" stroke-linejoin="round" points="0.0,204.5 1.25,204.22 2.5,203.94 3.75,204.26 5.0,204.0 6.25,203.87 7.5,204.53 8.75,204.63 10.0,205.0 11.25,204.48 12.5,204.76 13.75,204.21 15.0,204.5 16.25,204.07 17.5,203.36 18.75,203.01 20.0,203.0 21.33,202.43 22.67,202.29 24.0,201.5 25.33,200.83 26.67,200.58 28.0,200.5 29.2,200.81 30.4,201.3 31.6,201.17 32.8,201.21 34.0,201.5 35.5,201.18 37.0,200.0 38.25,199.89 39.5,200.92 40.75,200.71 42.0,201.2 43.25,200.83 44.5,200.76 45.75,200.88 47.0,201.0 48.33,201.68 49.67,201.51 51.0,202.2 52.33,202.54 53.67,202.86 55.0,203.0 56.25,203.01 57.5,203.29 58.75,202.98 60.0,203.5 61.5,203.6 63.0,204.5 64.2,204.24 65.4,204.66 66.6,204.43 67.8,204.33 69.0,204.5 70.2,204.98 71.4,205.26 72.6,205.52 73.8,206.36 75.0,206.5 76.25,206.8 77.5,206.52 78.75,206.94 80.0,207.0 81.25,207.27 82.5,207.84 83.75,207.96 85.0,208.0 86.2,207.65 87.4,208.11 88.6,207.18 89.8,207.29 91.0,207.2 92.2,207.63 93.4,207.29 94.6,207.79 95.8,207.59 97.0,208.2 98.2,208.21 99.4,208.16 100.6,207.85 101.8,207.98 103.0,207.5 104.2,207.79 105.4,208.6 106.6,208.96 107.8,209.41 109.0,209.8 110.5,208.61 112.0,207.5 113.25,207.98 114.5,208.25 115.75,208.0 117.0,208.2 118.2,208.15 119.4,207.4 120.6,207.78 121.8,207.53 123.0,207.2 124.5,208.04 126.0,208.0 127.25,207.66 128.5,206.56 129.75,206.02 131.0,205.5 132.2,205.31 133.4,204.39 134.6,204.45 135.8,203.84 137.0,203.8 138.33,203.26 139.67,203.0 141.0,203.2 142.33,203.31 143.67,202.6 145.0,202.8 146.25,203.0 147.5,203.55 148.75,204.41 150.0,204.5 151.25,204.95 152.5,206.1 153.75,207.02 155.0,207.8 156.5,207.15 158.0,205.8 159.33,206.42 160.67,206.79 162.0,206.8 163.5,207.8 165.0,209.2 166.5,207.02 168.0,205.0 169.33,205.21 170.67,206.01 172.0,206.0 173.33,207.58 174.67,208.02 176.0,209.5 177.33,208.38 178.67,207.59 180.0,207.0 181.33,207.09 182.67,207.65 184.0,208.0 186.0,206.0 187.33,204.75 188.67,203.12 190.0,202.0 191.33,202.22 192.67,203.26 194.0,204.0 195.33,203.88 196.67,204.06 198.0,204.0 199.2,205.11 200.4,205.57 201.6,206.11 202.8,206.91 204.0,207.5 205.2,207.96 206.4,207.7 207.6,208.76 208.8,208.95 210.0,209.0 211.33,209.17 212.67,208.93 214.0,208.5 215.2,208.66 216.4,208.93 217.6,208.92 218.8,209.66 220.0,209.8 221.25,209.51 222.5,209.61 223.75,209.84 225.0,210.2 226.2,210.02 227.4,210.3 228.6,210.16 229.8,210.23 231.0,210.8 232.2,210.43 233.4,210.32 234.6,210.5 235.8,210.13 237.0,210.5 238.33,211.17 239.67,211.27 241.0,211.5 242.25,211.43 243.5,211.78 244.75,212.11 246.0,212.5 247.33,211.48 248.67,210.36 250.0,209.8 251.25,210.04 252.5,210.09 253.75,209.54 255.0,209.5 256.5,209.99 258.0,210.5 259.33,209.69 260.67,209.28 262.0,209.2 263.5,210.06 265.0,211.2 266.33,209.99 267.67,209.5 269.0,208.2 270.2,208.16 271.4,208.29 272.6,209.39 273.8,209.27 275.0,209.5 276.2,209.12 277.4,209.42 278.6,208.89 279.8,209.29 281.0,209.2 282.2,209.43 283.4,209.13 284.6,208.78 285.8,208.19 287.0,208.2 288.2,207.94 289.4,207.62 290.6,208.02 291.8,207.67 293.0,207.5 294.33,208.42 295.67,208.68 297.0,209.5 298.5,209.0 300.0,209.0 301.2,209.32 302.4,209.52 303.6,209.44 304.8,209.44 306.0,209.2 307.25,209.19 308.5,208.82 309.75,208.05 311.0,208.0 312.25,208.32 313.5,208.47 314.75,208.48 316.0,209.2 317.2,208.9 318.4,209.24 319.6,209.34 320.8,209.85 322.0,209.8 323.25,209.89 324.5,209.1 325.75,209.22 327.0,208.5 328.25,209.44 329.5,209.91 330.75,209.88 332.0,210.5 333.2,210.11 334.4,209.97 335.6,209.81 336.8,209.67 338.0,209.8 339.33,210.48 340.67,211.29 342.0,211.5 343.5,210.66 345.0,209.2 346.33,209.38 347.67,209.74 349.0,209.8 350.5,210.92 352.0,211.5 353.25,211.55 354.5,212.49 355.75,213.14 357.0,213.2 358.33,213.79 359.67,214.09 361.0,214.2 362.33,213.11 363.67,211.78 365.0,211.0 366.5,209.86 368.0,208.2 369.33,208.05 370.67,208.47 372.0,208.2 373.5,208.02 375.0,207.0 376.33,206.57 377.67,206.24 379.0,206.0 380.5,206.5 382.0,206.2 383.5,207.8 385.0,209.0 386.5,208.8 388.0,209.2 389.5,209.76 391.0,211.0 392.33,209.85 393.67,209.7 395.0,208.5 396.33,209.68 397.67,209.98 399.0,211.2 400.33,211.59 401.67,211.83 403.0,211.5 404.33,211.31 405.67,210.7 407.0,210.5 408.33,210.11 409.67,209.3 411.0,209.2 412.75,207.91 414.5,207.5 415.5,209.5 416.75,207.67 418.0,205.0 419.33,203.8 420.67,202.36 422.0,201.0 423.5,200.64 425.0,199.5 427.0,198.0 428.33,197.54 429.67,197.53 431.0,196.8 432.2,197.09 433.4,196.54 434.6,196.58 435.8,196.61 437.0,196.8 438.33,196.63 439.67,197.01 441.0,197.0 442.5,197.78 444.0,199.0 445.5,198.03 447.0,197.2 448.5,197.27 450.0,198.0 451.33,199.04 452.67,199.2 454.0,200.0 455.33,201.46 456.67,203.08 458.0,204.5 459.5,205.11 461.0,205.0 462.33,205.26 463.67,206.04 465.0,206.0 466.33,206.0 467.67,206.03 469.0,206.0 470.33,206.85 471.67,207.23 473.0,208.5 474.33,207.68 475.67,206.68 477.0,206.2 478.33,205.69 479.67,206.34 481.0,206.0 482.25,206.96 483.5,208.5 484.75,206.23 486.0,204.0 487.33,203.87 488.67,203.38 490.0,203.0 491.5,203.34 493.0,204.0 495.0,201.0 496.33,200.18 497.67,199.38 499.0,198.5 500.33,199.92 501.67,200.48 503.0,202.0 504.5,201.8 506.0,201.5 507.33,200.27 508.67,199.3 510.0,198.5 511.5,200.5 513.0,202.0 515.0,199.5 517.0,200.0 518.5,199.01 520.0,198.0 522.0,197.0 524.0,200.5 525.5,202.06 527.0,203.5 528.5,204.23 530.0,204.5 531.5,204.12 533.0,203.0 534.5,202.95 536.0,203.0 537.5,204.35 539.0,205.5 540.5,204.75 542.0,204.0 543.5,203.91 545.0,203.8 546.5,203.57 548.0,203.0 549.5,204.21 551.0,205.5 552.5,204.78 554.0,204.0 556.0,203.0 558,200.5"/>
<text x="2.2" y="116.8" font-size="7.3" font-weight="bold" fill="#d0400c">1.24</text>
<line x1="726.3" y1="16" x2="726.3" y2="221.3" stroke="#a8a8a8" stroke-width="0.9"/>
<line x1="0" y1="221.2" x2="726.3" y2="221.2" stroke="#a8a8a8" stroke-width="0.9"/>
<g stroke="#a8a8a8" stroke-width="0.6"><line x1="10.8" y1="221.3" x2="10.8" y2="223.5"/><line x1="39.6" y1="221.3" x2="39.6" y2="223.5"/><line x1="68.5" y1="221.3" x2="68.5" y2="223.5"/><line x1="97.3" y1="221.3" x2="97.3" y2="223.5"/><line x1="126.2" y1="221.3" x2="126.2" y2="223.5"/><line x1="155.0" y1="221.3" x2="155.0" y2="223.5"/><line x1="183.8" y1="221.3" x2="183.8" y2="223.5"/><line x1="212.7" y1="221.3" x2="212.7" y2="223.5"/><line x1="241.5" y1="221.3" x2="241.5" y2="223.5"/><line x1="270.4" y1="221.3" x2="270.4" y2="223.5"/><line x1="299.2" y1="221.3" x2="299.2" y2="223.5"/><line x1="328.0" y1="221.3" x2="328.0" y2="223.5"/><line x1="356.9" y1="221.3" x2="356.9" y2="223.5"/><line x1="385.7" y1="221.3" x2="385.7" y2="223.5"/><line x1="414.6" y1="221.3" x2="414.6" y2="223.5"/><line x1="443.4" y1="221.3" x2="443.4" y2="223.5"/><line x1="472.2" y1="221.3" x2="472.2" y2="223.5"/><line x1="501.1" y1="221.3" x2="501.1" y2="223.5"/><line x1="529.9" y1="221.3" x2="529.9" y2="223.5"/></g>

<rect x="726.7" y="29.9" width="18.2" height="4.3" fill="#f4f4f4"/>
<text x="728.6" y="33.6" font-size="4.25" fill="#202020">1.08346</text>
<rect x="726.7" y="106.9" width="16.4" height="5" fill="#eea000"/>
<text x="728.6" y="111.1" font-size="4.25" fill="#202020">0.5024</text>
<rect x="726.5" y="194.4" width="16.5" height="4.6" fill="#34b860"/>
<text x="728.6" y="198.4" font-size="4.25" fill="#102010">0.4979</text>
<text transform="translate(728.6,25.099999999999998) scale(0.88,1)" font-size="4.7" fill="#ececec" stroke="#ececec" stroke-width="0.1">1.08385</text><text transform="translate(728.6,40.6) scale(0.88,1)" font-size="4.7" fill="#ececec" stroke="#ececec" stroke-width="0.1">1.08320</text><text transform="translate(728.6,55.5) scale(0.88,1)" font-size="4.7" fill="#ececec" stroke="#ececec" stroke-width="0.1">1.08255</text><text transform="translate(728.6,71.2) scale(0.88,1)" font-size="4.7" fill="#ececec" stroke="#ececec" stroke-width="0.1">1.08190</text><text transform="translate(728.6,86.5) scale(0.88,1)" font-size="4.7" fill="#ececec" stroke="#ececec" stroke-width="0.1">1.08125</text><text transform="translate(728.6,91.7) scale(0.88,1)" font-size="4.7" fill="#ececec" stroke="#ececec" stroke-width="0.1">0.5036</text><text transform="translate(728.6,220.1) scale(0.88,1)" font-size="4.7" fill="#ececec" stroke="#ececec" stroke-width="0.1">0.4967</text><text x="-18.5" y="226.9" font-size="4.25" fill="#e0e0e0" stroke="#e0e0e0" stroke-width="0.22" text-anchor="start" font-weight="normal">25 Oct 06:29</text><text x="10.3" y="226.9" font-size="4.25" fill="#e0e0e0" stroke="#e0e0e0" stroke-width="0.22" text-anchor="start" font-weight="normal">25 Oct 07:01</text><text x="39.1" y="226.9" font-size="4.25" fill="#e0e0e0" stroke="#e0e0e0" stroke-width="0.22" text-anchor="start" font-weight="normal">25 Oct 07:33</text><text x="68.0" y="226.9" font-size="4.25" fill="#e0e0e0" stroke="#e0e0e0" stroke-width="0.22" text-anchor="start" font-weight="normal">25 Oct 08:05</text><text x="96.8" y="226.9" font-size="4.25" fill="#e0e0e0" stroke="#e0e0e0" stroke-width="0.22" text-anchor="start" font-weight="normal">25 Oct 08:37</text><text x="125.7" y="226.9" font-size="4.25" fill="#e0e0e0" stroke="#e0e0e0" stroke-width="0.22" text-anchor="start" font-weight="normal">25 Oct 09:09</text><text x="154.5" y="226.9" font-size="4.25" fill="#e0e0e0" stroke="#e0e0e0" stroke-width="0.22" text-anchor="start" font-weight="normal">25 Oct 09:41</text><text x="183.3" y="226.9" font-size="4.25" fill="#e0e0e0" stroke="#e0e0e0" stroke-width="0.22" text-anchor="start" font-weight="normal">25 Oct 10:13</text><text x="212.2" y="226.9" font-size="4.25" fill="#e0e0e0" stroke="#e0e0e0" stroke-width="0.22" text-anchor="start" font-weight="normal">25 Oct 10:45</text><text x="241.0" y="226.9" font-size="4.25" fill="#e0e0e0" stroke="#e0e0e0" stroke-width="0.22" text-anchor="start" font-weight="normal">25 Oct 11:17</text><text x="269.9" y="226.9" font-size="4.25" fill="#e0e0e0" stroke="#e0e0e0" stroke-width="0.22" text-anchor="start" font-weight="normal">25 Oct 11:49</text><text x="298.7" y="226.9" font-size="4.25" fill="#e0e0e0" stroke="#e0e0e0" stroke-width="0.22" text-anchor="start" font-weight="normal">25 Oct 12:21</text><text x="327.5" y="226.9" font-size="4.25" fill="#e0e0e0" stroke="#e0e0e0" stroke-width="0.22" text-anchor="start" font-weight="normal">25 Oct 12:53</text><text x="356.4" y="226.9" font-size="4.25" fill="#e0e0e0" stroke="#e0e0e0" stroke-width="0.22" text-anchor="start" font-weight="normal">25 Oct 13:25</text><text x="385.2" y="226.9" font-size="4.25" fill="#e0e0e0" stroke="#e0e0e0" stroke-width="0.22" text-anchor="start" font-weight="normal">25 Oct 13:57</text><text x="414.1" y="226.9" font-size="4.25" fill="#e0e0e0" stroke="#e0e0e0" stroke-width="0.22" text-anchor="start" font-weight="normal">25 Oct 14:29</text><text x="442.9" y="226.9" font-size="4.25" fill="#e0e0e0" stroke="#e0e0e0" stroke-width="0.22" text-anchor="start" font-weight="normal">25 Oct 15:01</text><text x="471.7" y="226.9" font-size="4.25" fill="#e0e0e0" stroke="#e0e0e0" stroke-width="0.22" text-anchor="start" font-weight="normal">25 Oct 15:33</text><text x="500.6" y="226.9" font-size="4.25" fill="#e0e0e0" stroke="#e0e0e0" stroke-width="0.22" text-anchor="start" font-weight="normal">25 Oct 16:05</text><text x="529.4" y="226.9" font-size="4.25" fill="#e0e0e0" stroke="#e0e0e0" stroke-width="0.22" text-anchor="start" font-weight="normal">25 Oct 16:37</text>
</svg>
<div class="a" style="left:0;top:14.2px;width:746.5px;height:2.6px;background:linear-gradient(#565656,#3a3a3a 60%,#1e1e1e)"></div>
<svg class="a" style="left:550px;top:14px" width="20" height="6" viewBox="550 14 20 6"><path d="M556.5 15.9 L561.3 15.9 L559 18.4 Z" fill="#a4bad0"/></svg>
<div class="a" style="left:746.5px;top:14px;width:3.5px;height:217px;background:#c0d6ec"></div>
<div class="a" style="left:0;top:230.4px;width:750px;height:1.2px;background:#e2eef8"></div>
<div class="a" style="left:0;top:231.6px;width:750px;height:2.1px;background:#b6d4ec"></div>
<div class="a" style="left:0;top:233.7px;width:750px;height:1.6px;background:#4f8896"></div>
<div class="a" style="left:0;top:235.3px;width:750px;height:0.8px;background:#a4b4c0"></div>
<div class="a" style="left:0;top:236.1px;width:750px;height:13px;background:linear-gradient(#c2ceda,#d6e2ee)"></div>
<div class="a" style="left:283px;top:240.2px;font-size:7px;line-height:7px;color:#1e2a36;white-space:nowrap;transform:scaleX(0.9);transform-origin:0 0">USDCHF,M1</div>
<svg class="a" style="left:700px;top:239.3px" width="50" height="10" viewBox="700 239.3 50 10"><defs><linearGradient id="bgi" x1="0" y1="0" x2="0" y2="1"><stop offset="0" stop-color="#dfe8f0"/><stop offset="0.5" stop-color="#d2dde8"/><stop offset="0.52" stop-color="#c6d3df"/><stop offset="1" stop-color="#d0dbe6"/></linearGradient><linearGradient id="cgi" x1="0" y1="0" x2="0" y2="1"><stop offset="0" stop-color="#dfe8f0"/><stop offset="0.5" stop-color="#d2dde8"/><stop offset="0.52" stop-color="#c6d3df"/><stop offset="1" stop-color="#d0dbe6"/></linearGradient></defs><rect x="701.8" y="240.3" width="14" height="7.5" rx="1.5" fill="url(#bgi)" stroke="#a0b0c0" stroke-width="0.6"/><rect x="717.1" y="240.3" width="14" height="7.5" rx="1.5" fill="url(#bgi)" stroke="#a0b0c0" stroke-width="0.6"/><rect x="732.4" y="240.3" width="14" height="7.5" rx="1.5" fill="url(#cgi)" stroke="#a0b0c0" stroke-width="0.6"/><rect x="706.3" y="244.0" width="4.4" height="1.5" fill="#e8ecf0" stroke="#7c8894" stroke-width="0.5"/><rect x="721.6" y="242.4" width="4.4" height="2.8" fill="#e8ecf0" stroke="#7c8894" stroke-width="0.5"/><rect x="722.6" y="243.3" width="1.4" height="1.0" fill="#7c8894"/><path d="M737.4 242.3 L741.6 245.60000000000002 M741.6 242.3 L737.4 245.60000000000002" stroke="#8a96a2" stroke-width="1.8" stroke-linecap="round"/><path d="M737.4 242.3 L741.6 245.60000000000002 M741.6 242.3 L737.4 245.60000000000002" stroke="#eef0f2" stroke-width="1.0" stroke-linecap="round"/></svg>
<svg width="750" height="122" viewBox="0 251 750 122" style="position:absolute;left:0;top:251px;font-family:'Liberation Sans',sans-serif">
<defs><clipPath id="c2"><rect x="0" y="251" width="726" height="121"/></clipPath></defs>
<rect x="0" y="251" width="746.5" height="121" fill="#000"/>
<g stroke="#3e4a56" stroke-width="0.9" stroke-dasharray="1 1.9"><line x1="10.8" y1="251" x2="10.8" y2="372"/><line x1="25.2" y1="251" x2="25.2" y2="372"/><line x1="39.6" y1="251" x2="39.6" y2="372"/><line x1="54.1" y1="251" x2="54.1" y2="372"/><line x1="68.5" y1="251" x2="68.5" y2="372"/><line x1="82.9" y1="251" x2="82.9" y2="372"/><line x1="97.3" y1="251" x2="97.3" y2="372"/><line x1="111.7" y1="251" x2="111.7" y2="372"/><line x1="126.2" y1="251" x2="126.2" y2="372"/><line x1="140.6" y1="251" x2="140.6" y2="372"/><line x1="155.0" y1="251" x2="155.0" y2="372"/><line x1="169.4" y1="251" x2="169.4" y2="372"/><line x1="183.8" y1="251" x2="183.8" y2="372"/><line x1="198.3" y1="251" x2="198.3" y2="372"/><line x1="212.7" y1="251" x2="212.7" y2="372"/><line x1="227.1" y1="251" x2="227.1" y2="372"/><line x1="241.5" y1="251" x2="241.5" y2="372"/><line x1="255.9" y1="251" x2="255.9" y2="372"/><line x1="270.4" y1="251" x2="270.4" y2="372"/><line x1="284.8" y1="251" x2="284.8" y2="372"/><line x1="299.2" y1="251" x2="299.2" y2="372"/><line x1="313.6" y1="251" x2="313.6" y2="372"/><line x1="328.0" y1="251" x2="328.0" y2="372"/><line x1="342.5" y1="251" x2="342.5" y2="372"/><line x1="356.9" y1="251" x2="356.9" y2="372"/><line x1="371.3" y1="251" x2="371.3" y2="372"/><line x1="385.7" y1="251" x2="385.7" y2="372"/><line x1="400.1" y1="251" x2="400.1" y2="372"/><line x1="414.6" y1="251" x2="414.6" y2="372"/><line x1="429.0" y1="251" x2="429.0" y2="372"/><line x1="443.4" y1="251" x2="443.4" y2="372"/><line x1="457.8" y1="251" x2="457.8" y2="372"/><line x1="472.2" y1="251" x2="472.2" y2="372"/><line x1="486.7" y1="251" x2="486.7" y2="372"/><line x1="501.1" y1="251" x2="501.1" y2="372"/><line x1="515.5" y1="251" x2="515.5" y2="372"/><line x1="529.9" y1="251" x2="529.9" y2="372"/><line x1="544.3" y1="251" x2="544.3" y2="372"/><line x1="558.8" y1="251" x2="558.8" y2="372"/><line x1="573.2" y1="251" x2="573.2" y2="372"/><line x1="587.6" y1="251" x2="587.6" y2="372"/><line x1="602.0" y1="251" x2="602.0" y2="372"/><line x1="616.4" y1="251" x2="616.4" y2="372"/><line x1="630.9" y1="251" x2="630.9" y2="372"/><line x1="645.3" y1="251" x2="645.3" y2="372"/><line x1="659.7" y1="251" x2="659.7" y2="372"/><line x1="674.1" y1="251" x2="674.1" y2="372"/><line x1="688.5" y1="251" x2="688.5" y2="372"/><line x1="703.0" y1="251" x2="703.0" y2="372"/><line x1="717.4" y1="251" x2="717.4" y2="372"/></g>
<g stroke="#45525e" stroke-width="0.9" stroke-dasharray="1.7 1.3"><line x1="0" y1="255.5" x2="726" y2="255.5"/><line x1="0" y1="271.3" x2="726" y2="271.3"/><line x1="0" y1="286.1" x2="726" y2="286.1"/><line x1="0" y1="301.0" x2="726" y2="301.0"/><line x1="0" y1="316.0" x2="726" y2="316.0"/><line x1="0" y1="331.2" x2="726" y2="331.2"/><line x1="0" y1="346.3" x2="726" y2="346.3"/><line x1="0" y1="361.7" x2="726" y2="361.7"/></g>
<line x1="0" y1="360.2" x2="726" y2="360.2" stroke="#176a17" stroke-width="1.1" stroke-dasharray="4.3 1.9 2.2 2.4" stroke-dashoffset="6.6"/>
<g clip-path="url(#c2)"><polyline fill="none" stroke="#20aa20" stroke-width="0.95" stroke-opacity="1" stroke-linejoin="round" points="151.6,372.5 153.1,361.9 154.5,354.6 156.0,361.9 157.5,368.5 159.0,359.0 161.2,358.7 163.4,357.5 164.8,350.9 166.7,367.8 168.2,358.3 170.0,359.0 171.4,363.4 172.9,356.1 174.35,345.99 175.8,336.2 177.3,341.39 178.8,347.2 180.25,336.74 181.7,326.0 183.9,326.0 185.4,329.6 187.6,350.9 189.8,356.1 191.25,350.57 192.7,345.8 194.2,337.7 195.65,342.48 197.1,347.2 199.3,334.8 201.5,330.4 203.7,322.3 205.5,328.9 206.95,323.28 208.4,317.9 209.75,317.85 211.1,318.6 212.55,325.61 214.0,332.6 215.5,327.73 217.0,323.7 218.45,324.24 219.9,324.9 222.2,320.1 224.4,317.1 226.6,313.5 228.1,315.7 229.5,309.1 231.7,305.4 234.0,312.7 236.2,309.8 237.4,305.25 238.6,301.1 239.8,297.3 242.0,296.6 244.2,288.5 246.4,290.0 248.6,298.8 250.8,303.5 252.3,303.5 254.1,310.2 255.75,305.13 257.4,300.2 258.9,301.0 260.1,312.0 262.3,318.6 263.8,313.5 266.0,315.7 268.2,328.2 270.4,337.7 271.9,333.3 273.4,338.4 274.85,333.59 276.3,328.2 278.5,334.0 280.7,332.6 282.15,337.01 283.6,342.1 285.8,327.4 288.0,330.4 290.0,335.5 292.4,326.7 293.9,322.05 295.4,317.9 296.85,316.16 298.3,314.2 299.8,315.7 301.3,316.4 302.75,314.62 304.2,312.7 305.43,313.61 306.67,315.13 307.9,315.7 309.35,318.19 310.8,321.5 313.0,313.5 315.2,322.3 316.65,320.02 318.1,317.1 320.0,312.3 321.6,310.46 323.2,309.0 324.55,311.78 325.9,315.2 327.35,315.26 328.8,316.0 330.25,310.68 331.7,305.7 334.0,310.5 335.4,305.7 337.6,306.4 339.1,300.98 340.6,295.0 342.05,294.51 343.5,294.6 345.7,311.5 347.9,310.1 350.1,290.2 352.3,288.8 354.5,287.3 356.0,279.2 357.2,275.37 358.4,271.53 359.6,267.5 361.1,269.0 363.3,278.5 365.5,291.7 366.5,300.0 368.2,310.3 370.4,314.7 372.6,322.0 374.8,327.2 376.3,324.2 378.5,333.8 380.7,341.1 382.9,347.0 384.4,338.2 385.8,330.1 388.0,331.6 389.5,325.0 391.4,311.0 393.2,320.6 394.9,329.4 396.9,322.0 399.1,309.5 400.55,306.49 402.0,303.7 404.2,303.7 404.9,314.7 407.1,302.9 409.3,310.3 411.5,326.4 413.7,336.7 414.5,347.0 415.5,322.0 416.7,341.1 418.1,340.4 419.8,354.0 420.8,373"/><polyline fill="none" stroke="#20aa20" stroke-width="0.95" stroke-opacity="1" stroke-linejoin="round" points="454.7,373.0 456.2,356.1 457.9,343.6 459.1,350.9 460.6,337.0 462.0,347.2 463.5,348.7 465.7,343.6 467.2,331.1 468.6,343.6 470.1,322.3 471.6,314.9 473.0,320.8 474.5,339.9 476.7,340.6 478.9,345.0 481.1,337.0 483.3,318.6 484.8,331.1 486.7,359.0 488.5,359.0 490.7,371.5 492.15,363.64 493.6,356.1 495.8,368.5 496.5,373"/><polyline fill="none" stroke="#20aa20" stroke-width="0.95" stroke-opacity="1" stroke-linejoin="round" points="527.2,373.0 528.0,365.6 529.5,369.7 530.7,371.4 532.4,361.0 533.6,371.4 535.3,362.1 537.0,371.4 538.8,361.0 540.8,358.6 542.8,362.1 544.0,369.1 545.4,352.3 546.6,357.5 548.1,363.9 549.8,354.0 551.2,341.2 552.4,345.3 554.4,359.8 556.5,373"/>
<line x1="109" y1="371" x2="109.6" y2="373" stroke="#22b022" stroke-width="0.9"/></g>
<line x1="726.3" y1="251" x2="726.3" y2="372" stroke="#a8a8a8" stroke-width="0.9"/>

<text transform="translate(728.6,257.7) scale(0.88,1)" font-size="4.7" fill="#ececec" stroke="#ececec" stroke-width="0.1">0.86755</text><text transform="translate(728.6,273.5) scale(0.88,1)" font-size="4.7" fill="#ececec" stroke="#ececec" stroke-width="0.1">0.86735</text><text transform="translate(728.6,288.3) scale(0.88,1)" font-size="4.7" fill="#ececec" stroke="#ececec" stroke-width="0.1">0.86715</text><text transform="translate(728.6,303.2) scale(0.88,1)" font-size="4.7" fill="#ececec" stroke="#ececec" stroke-width="0.1">0.86695</text><text transform="translate(728.6,318.2) scale(0.88,1)" font-size="4.7" fill="#ececec" stroke="#ececec" stroke-width="0.1">0.86675</text><text transform="translate(728.6,333.4) scale(0.88,1)" font-size="4.7" fill="#ececec" stroke="#ececec" stroke-width="0.1">0.86655</text><text transform="translate(728.6,348.5) scale(0.88,1)" font-size="4.7" fill="#ececec" stroke="#ececec" stroke-width="0.1">0.86635</text><text transform="translate(728.6,363.9) scale(0.88,1)" font-size="4.7" fill="#ececec" stroke="#ececec" stroke-width="0.1">0.86615</text>
</svg>
<div class="a" style="left:0;top:249px;width:746.5px;height:2.9px;background:linear-gradient(#2a2a2a 0%,#333 40%,#585858 65%,#3a3a3a 85%,#141414 100%)"></div>
<svg class="a" style="left:550px;top:250px" width="20" height="6" viewBox="550 250 20 6"><path d="M556.5 251.3 L561.3 251.3 L559 253.9 Z" fill="#a4bad0"/></svg>
<div class="a" style="left:746.5px;top:249px;width:3.5px;height:124px;background:#c0d6ec"></div>
<div class="a" style="left:0;top:372px;width:750px;height:1.6px;background:linear-gradient(#6a6a6a,#d8d8d8)"></div>
<div class="a" style="left:0;top:373.6px;width:750px;height:8.6px;background:#eeeeee"></div>
<div class="a" style="left:0;top:382.2px;width:750px;height:1.9px;background:#f3f3f3"></div>
<div class="a" style="left:0;top:384.1px;width:750px;height:1px;background:#c4c4c4"></div>
<div class="a" style="left:0;top:385.1px;width:750px;height:9.9px;background:#fbfbfb"></div>
<div class="a" style="left:0;top:395px;width:750px;height:1px;background:#e0e6ec"></div>
<div class="a" style="left:0;top:396px;width:750px;height:8.4px;background:#ffffff"></div>
<div class="a" style="left:0;top:404.4px;width:750px;height:9.2px;background:#efefef"></div>
<div class="a" style="left:0;top:413.6px;width:750px;height:8.4px;background:#cdcdcd"></div>
<svg width="750" height="49" viewBox="0 373 750 49" style="position:absolute;left:0;top:373px;font-family:'Liberation Sans',sans-serif">
<line x1="97" y1="384.5" x2="97" y2="413.5" stroke="#e4e8ec" stroke-width="0.8"/><line x1="155.8" y1="384.5" x2="155.8" y2="413.5" stroke="#e4e8ec" stroke-width="0.8"/><line x1="201.5" y1="384.5" x2="201.5" y2="413.5" stroke="#e4e8ec" stroke-width="0.8"/><line x1="259.8" y1="384.5" x2="259.8" y2="413.5" stroke="#e4e8ec" stroke-width="0.8"/><line x1="325" y1="384.5" x2="325" y2="413.5" stroke="#e4e8ec" stroke-width="0.8"/><line x1="389.5" y1="384.5" x2="389.5" y2="413.5" stroke="#e4e8ec" stroke-width="0.8"/><line x1="455" y1="384.5" x2="455" y2="413.5" stroke="#e4e8ec" stroke-width="0.8"/><line x1="519.5" y1="384.5" x2="519.5" y2="413.5" stroke="#e4e8ec" stroke-width="0.8"/><line x1="584" y1="384.5" x2="584" y2="413.5" stroke="#e4e8ec" stroke-width="0.8"/><line x1="649" y1="384.5" x2="649" y2="413.5" stroke="#e4e8ec" stroke-width="0.8"/><text x="95" y="392.1" font-size="5.5" fill="#3a3240" text-anchor="end" font-weight="normal" >Время</text><text x="95" y="401.7" font-size="4.9" fill="#262626" text-anchor="end" font-weight="normal" >2024.10.25 16:51:31</text><text x="95" y="410.6" font-size="4.9" fill="#262626" text-anchor="end" font-weight="normal" >2024.10.25 16:51:40</text><text x="153.4" y="392.1" font-size="5.5" fill="#3a3240" text-anchor="end" font-weight="normal" >Тип</text><text x="153.4" y="401.7" font-size="5.4" fill="#262626" text-anchor="end" font-weight="normal" >buy</text><text x="153.4" y="410.6" font-size="5.4" fill="#262626" text-anchor="end" font-weight="normal" >sell</text><text x="199.8" y="392.1" font-size="5.5" fill="#3a3240" text-anchor="end" font-weight="normal" >Объем</text><text x="199.8" y="401.7" font-size="4.9" fill="#262626" text-anchor="end" font-weight="normal" >1.00</text><text x="199.8" y="410.6" font-size="4.9" fill="#262626" text-anchor="end" font-weight="normal" >1.00</text><text x="257.3" y="392.1" font-size="5.5" fill="#3a3240" text-anchor="end" font-weight="normal" >Символ</text><text x="257.3" y="401.7" font-size="5.4" fill="#262626" text-anchor="end" font-weight="normal" >eurusd</text><text x="257.3" y="410.6" font-size="5.4" fill="#262626" text-anchor="end" font-weight="normal" >usdchf</text><text x="323" y="392.1" font-size="5.5" fill="#3a3240" text-anchor="end" font-weight="normal" >Цена</text><text x="323" y="401.7" font-size="4.9" fill="#262626" text-anchor="end" font-weight="normal" >1.08302</text><text x="323" y="410.6" font-size="4.9" fill="#262626" text-anchor="end" font-weight="normal" >0.86617</text><text x="387.7" y="392.1" font-size="5.0" fill="#3a3240" text-anchor="end" font-weight="normal" >S / L</text><text x="387.7" y="401.7" font-size="4.9" fill="#262626" text-anchor="end" font-weight="normal" >0.00000</text><text x="387.7" y="410.6" font-size="4.9" fill="#262626" text-anchor="end" font-weight="normal" >0.00000</text><text x="453" y="392.1" font-size="5.0" fill="#3a3240" text-anchor="end" font-weight="normal" >T / P</text><text x="453" y="401.7" font-size="4.9" fill="#262626" text-anchor="end" font-weight="normal" >0.00000</text><text x="453" y="410.6" font-size="4.9" fill="#262626" text-anchor="end" font-weight="normal" >0.00000</text><text x="517.7" y="392.1" font-size="5.5" fill="#3a3240" text-anchor="end" font-weight="normal" >Цена</text><text x="517.7" y="401.7" font-size="4.9" fill="#262626" text-anchor="end" font-weight="normal" >1.08346</text><text x="517.7" y="410.6" font-size="4.9" fill="#262626" text-anchor="end" font-weight="normal" >0.86597</text><text x="582.3" y="392.1" font-size="5.5" fill="#3a3240" text-anchor="end" font-weight="normal" >Комиссия</text><text x="582.3" y="401.7" font-size="4.9" fill="#262626" text-anchor="end" font-weight="normal" >-8.00</text><text x="582.3" y="410.6" font-size="4.9" fill="#262626" text-anchor="end" font-weight="normal" >-8.00</text><text x="647.4" y="392.1" font-size="5.5" fill="#3a3240" text-anchor="end" font-weight="normal" >Своп</text><text x="647.4" y="401.7" font-size="4.9" fill="#262626" text-anchor="end" font-weight="normal" >0.00</text><text x="647.4" y="410.6" font-size="4.9" fill="#262626" text-anchor="end" font-weight="normal" >0.00</text><text x="747.4" y="392.1" font-size="5.5" fill="#3a3240" text-anchor="end" font-weight="normal" >Прибыль</text><text x="740.2" y="401.7" font-size="4.9" fill="#262626" text-anchor="end" font-weight="normal" >44.00</text><text x="740.2" y="410.6" font-size="4.9" fill="#262626" text-anchor="end" font-weight="normal" >23.90</text><text x="747" y="401.8" font-size="5.5" fill="#8a8a8a" text-anchor="middle" font-weight="normal" >×</text><text x="747" y="411" font-size="5.5" fill="#8a8a8a" text-anchor="middle" font-weight="normal" >×</text><text x="0.6" y="419.7" font-size="5.3" fill="#2a2a2a" text-anchor="start" font-weight="bold" >2.29&#160;&#160;Маржа: 2 083.02&#160;&#160;Свободная маржа: 7 219.27&#160;&#160;Уровень: 446.58%</text><text x="739.5" y="419.7" font-size="5.3" fill="#2a2a2a" text-anchor="end" font-weight="bold" >51.90</text><path d="M739.2 375.6 L737.6 377.3 L739.2 379" stroke="#8a8a8a" stroke-width="0.7" fill="none"/><path d="M745.6 375.6 L747.2 377.3 L745.6 379" stroke="#8a8a8a" stroke-width="0.7" fill="none"/>
<g>
<line x1="726.5" y1="399" x2="734.8" y2="407.3" stroke="#fff" stroke-width="8.6" stroke-linecap="round"/>
<circle cx="719.5" cy="392.7" r="11.8" fill="#fff"/>
<line x1="726.5" y1="399" x2="734.8" y2="407.3" stroke="#333" stroke-width="4.6" stroke-linecap="round"/>
<circle cx="719.5" cy="392.7" r="8.4" fill="#fff" stroke="#333" stroke-width="3.4"/>
<path d="M719.5 387.6 V397.8 M714.4 392.7 H724.6" stroke="#333" stroke-width="2.8"/>
</g>
</svg>
</body></html>
